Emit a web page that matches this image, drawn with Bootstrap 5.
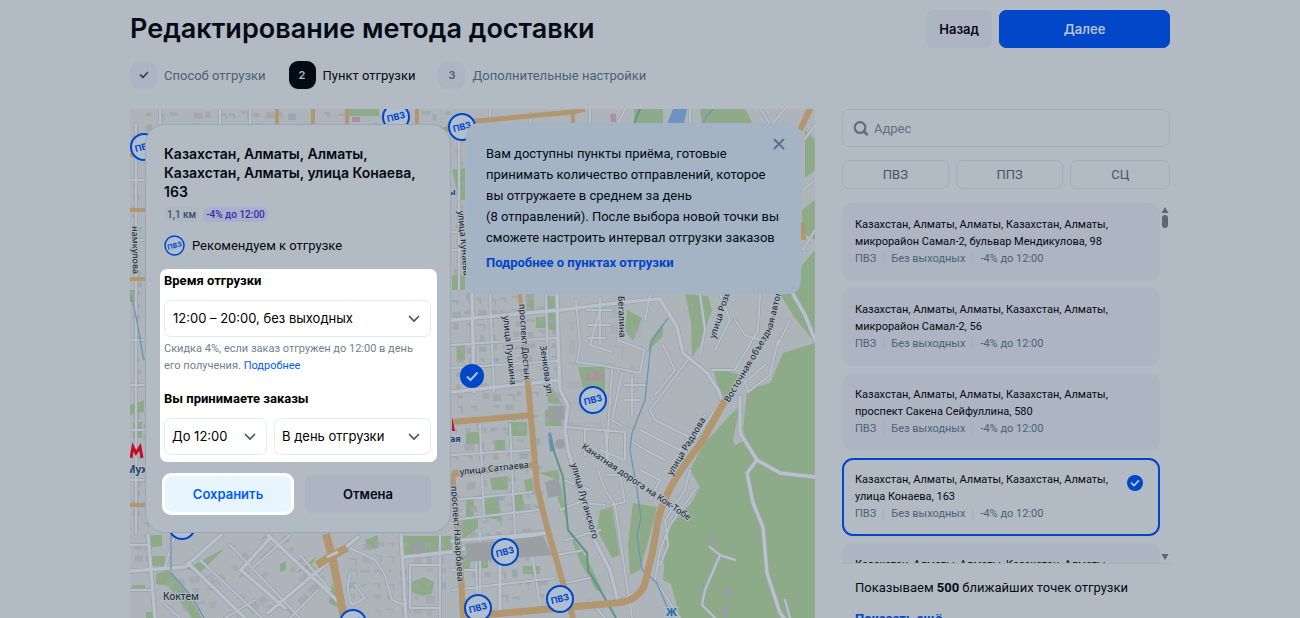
<!DOCTYPE html>
<html lang="ru">
<head>
<meta charset="utf-8">
<meta name="viewport" content="width=device-width, initial-scale=1">
<title>Редактирование метода доставки</title>
<link rel="stylesheet" href="https://cdn.jsdelivr.net/npm/bootstrap@5.3.0/dist/css/bootstrap.min.css">
<style>
:root{--bg:#b2bbc3;--soft:#acb5c1;--line:#a0afbf;--ink:#030b14;--mute:#4b6178;--blue:#0046c8}
body{font-family:Roboto,"Noto Sans",sans-serif;font-size:13px;line-height:17px;background:var(--bg);color:var(--ink);height:100vh;overflow:hidden}
button,input,select{font-family:inherit}
.page{max-width:80%;height:100vh}
.topbar{padding-top:10px}
h1{font-family:Inter,sans-serif;font-size:27px;line-height:38px;font-weight:600}
.gap-s{gap:7px}
.btn{--bs-btn-font-family:Inter,sans-serif;--bs-btn-font-size:13px;--bs-btn-font-weight:600;--bs-btn-line-height:18px;--bs-btn-padding-y:9px;--bs-btn-border-radius:7px}
.btn-soft{--bs-btn-bg:var(--soft);--bs-btn-color:var(--ink);--bs-btn-border-color:var(--soft);--bs-btn-padding-x:12px}
.btn-go{--bs-btn-bg:var(--blue);--bs-btn-color:#b6c3d3;--bs-btn-border-color:var(--blue);min-width:171px}
.btn-save{--bs-btn-bg:#e8f5ff;--bs-btn-color:#005bff;--bs-btn-border-color:#e8f5ff;--bs-btn-padding-y:8px}
.steps{gap:23px;margin:13px 0 20px;color:var(--mute)}
.step-no{width:27px;height:28px;border-radius:9px;background:var(--soft);font-family:Inter,sans-serif;font-weight:600;font-size:11px}
.step-on{color:var(--ink)}
.step-on .step-no{background:var(--ink);color:#b2bbc3}
.work{gap:27px;min-height:0}
.map-area{min-width:0;min-height:509px;overflow:hidden}
.map-svg{position:absolute;inset:0;width:100%;height:100%}
.map-svg text{font-family:"Noto Sans",sans-serif;font-weight:500;font-size:9px;fill:#25313d;stroke:#b2bbc3;stroke-width:2px;paint-order:stroke}
.map-svg .pin text{font-family:Inter,sans-serif;font-weight:700;font-size:9px;fill:var(--blue);stroke:none;text-anchor:middle}
.over{gap:15px;padding:14px 14px 0 15px}
.point{width:306px;flex:none;background:var(--bg);border:1px solid #98a8b8;border-radius:20px;padding:19px 14px 17px;margin-top:1px}
.point h2{font-family:Inter,sans-serif;font-size:14px;line-height:19px;font-weight:600;margin:0 4px 6px}
.in{margin-left:4px;margin-right:4px}
.tags{margin-bottom:13px}
.chip{font-size:10px;line-height:15px;font-weight:500;border-radius:6px;padding:0 3px;background:#acb8c2;color:#3b4e61}
.chip-sale{background:#a9b0cb;color:#3a2cad}
.lit{background:#fff;border-radius:7px;padding:3px 6px 7px 4px;margin:13px -1px 0 0;color:#000}
.lit label{font-size:13px;line-height:17px;font-weight:700;display:block;margin-bottom:11px}
.pick{width:100%;height:37px;border:1px solid #e3ebf2;border-radius:7px;padding:0 30px 0 8px;font-family:Inter,sans-serif;font-size:13px;color:#000;appearance:none;background:#fff url("data:image/svg+xml,%3Csvg xmlns='http://www.w3.org/2000/svg' viewBox='0 0 12 8'%3E%3Cpath fill='none' stroke='%23455a70' stroke-width='1.7' stroke-linecap='round' stroke-linejoin='round' d='M1.5 1.5 6 6.2l4.500-4.700'/%3E%3C/svg%3E") no-repeat right 10px center/12px 8px}
.days .pick{padding-left:7px}
.hint{font-size:11px;line-height:17px;color:#70818f;margin:3px 0 16px}
.hint a{color:#005bff;text-decoration:none}
.early{width:103px;flex:none}
.acts{margin:11px 5px 0 2px;gap:11px}
.ring{background:#fff;border-radius:9px;padding:3px;width:132px}
.note{background:#a4b4c4;border-radius:13px;padding:20px 12px 21px 20px;height:171px;min-width:0;position:relative}
.note p{font-size:13px;line-height:21px;margin:0 0 6px;max-width:300px}
.link-b{color:var(--blue);font-weight:700;text-decoration:none}
.x-btn{position:absolute;right:16px;top:15px;width:12px;height:12px;background:none;border:0;padding:0;line-height:0}
.side{width:328px;flex:none}
.find{height:38px;border:1px solid var(--line);border-radius:7px;padding:0 10px;gap:3px}
.find input{background:none;border:0;outline:0;font-size:13px;color:var(--mute);width:100%}
.find input::placeholder{color:#5c7086;opacity:1}
.types{margin-top:13px}
.btn-type{--bs-btn-font-family:Roboto,sans-serif;--bs-btn-color:#41566c;--bs-btn-border-color:var(--line);--bs-btn-font-weight:400;--bs-btn-line-height:17px;--bs-btn-padding-y:5px;--bs-btn-padding-x:39px}
.list-box{height:361px;margin-top:14px;border-bottom:1px solid #a9b3bd}
.pts{gap:7px;overflow:hidden;height:100%}
.pt{flex:none;display:flex;align-items:flex-start;justify-content:space-between;background:var(--soft);border:0;border-radius:11px;height:78px;padding:13px;text-align:left;color:var(--ink);font-size:11px;line-height:17px}
.pt-on{border:2px solid var(--blue);padding:11px;background:var(--bg)}
.meta{display:block;color:#4d627a;font-size:11px}
.meta span+span{border-left:1px solid #a1afbd;margin-left:7px;padding-left:7px}
.bar{width:10px;padding:4px 0 3px}
.thumb{width:6px;height:13px;border-radius:3px;background:#5f6871;margin-top:2px}
.foot{padding:15px 13px 0}
.more{display:block;margin-top:14px}
</style>
</head>
<body>
<div class="page mx-auto d-flex flex-column">
  <header class="topbar d-flex align-items-center gap-s">
    <h1 class="m-0 me-auto">Редактирование метода доставки</h1>
    <button class="btn btn-soft">Назад</button>
    <button class="btn btn-go">Далее</button>
  </header>
  <nav class="steps d-flex align-items-center" aria-label="Шаги">
    <div class="d-flex align-items-center gap-s"><span class="step-no d-flex align-items-center justify-content-center"><svg width="10" height="8" viewBox="0 0 10 8"><path d="M1.500 4 4 6.300 8.500 1.500" fill="none" stroke="#33475c" stroke-width="1.700" stroke-linecap="round" stroke-linejoin="round"/></svg></span><span>Способ отгрузки</span></div>
    <div class="d-flex align-items-center gap-s step-on"><span class="step-no d-flex align-items-center justify-content-center">2</span><span>Пункт отгрузки</span></div>
    <div class="d-flex align-items-center gap-s"><span class="step-no d-flex align-items-center justify-content-center">3</span><span>Дополнительные настройки</span></div>
  </nav>
  <main class="work d-flex flex-grow-1">
    <section class="map-area position-relative flex-grow-1">
      <svg class="map-svg" viewBox="130 109 685 509" preserveAspectRatio="xMidYMin slice" aria-label="Карта">
        <rect x="130" y="109" width="685" height="509" fill="#adb5ba"/>
        <g fill="#8eab89">
          <path d="M815 343 783 353 770 383 747 390 743 430 750 450 757 460 753 503 733 440 740 405 723 423 703 445 690 470 710 490 687 507 667 530 663 560 670 580 680 618H815zM690 470 700 487 690 505 667 530 663 580 740 618 815 618V343L780 380 745 440z"/>
          <path d="M685 294 708 296 712 310 700 345 692 357 691 322zM663 323 650 340 648 351 663 336zM713 368 742 375 722 402zM578 367H605V392L594 386 583 388zM627 310 642 318 633 341 625 330zM548 380 565 410 560 404 548 403zM600 510 612 507 620 555 612 558 597 530zM633 503 657 507 650 535 640 570 630 575 628 545zM815 470 812 510z"/>
          <path d="M348 109H379V116H348zM634 109H663V124H634zM700 109H745L753 124H702zM805 130 815 140 815 170 805 178zM802 210 815 200V240L802 232zM802 265 815 250V343L795 318 780 294 798 290z"/>
          <path d="M452 170 465 168V200H459zM452 275H465V290H452zM455 555H470V570H455zM526 294 534 294V310L527 315zM545 296H556V330H546zM536 317H547V328H536zM456 343 465 343V360H457zM495 440H505V450H495zM508 422H527V436H508zM545 410H562V426H545zM490 478 508 476V490H492zM484 500 498 496 502 520 486 518zM512 496 522 493 525 508 516 512zM466 500H474V522H466zM524 480 532 478 534 494H526zM466 432H480V444H466zM456 534 462 520 478 518V528L456 545zM538 473 558 470 567 520 558 500 560 480zM523 566H540V574H523zM478 560H488V568H478z"/>
          <path d="M148 535H162V546L148 548zM150 556H165V566H152zM156 574 168 570 185 590 202 618H192L178 598 168 586 156 584zM146 612H157V618H146zM132 585H145V590H132zM280 564 286 561 286 570 280 572zM332 583 341 609 329 603zM412 582 424 577 434 582 432 594 422 596 412 592zM365 540 378 535V548L368 550zM401 536H452V550L405 555zM570 534 588 560 603 592 596 590 580 562zM296 573 317 556 310 568zM130 290H137V302H130zM130 405 144 400V412L130 415zM133 422H142V438H133zM225 548 200 573 186 569z"/>
        </g>
        <path d="M673 109H687L684 124H667zM548 433 551 432 555 450 550 452z" fill="#6f93c0"/>
        <g id="blocks"></g>
        <g id="roads"></g>
        <g fill="none" stroke="#6d94b4" stroke-width="1.300">
          <path d="M668 318C660 330 650 340 650 352L645 400 632 433 630 450 637 490 641 518 637 535 642 570 657 583 667 607 672 618M171 535V570M170 572C185 588 192 596 204 618M713 109Q706 116 702 124M130 295C138 315 140 345 144 360"/>
          <path d="M550 440 563 477 568 530 587 553 588 570 603 595 616 618M640 109 634 124" stroke="#5f948b" stroke-width="2"/>
        </g>
        <g fill="none" stroke="#b1966f" stroke-linejoin="round">
          <path d="M436 132 477 121 573 112 585 109" stroke-width="5"/>
          <path d="M277 109V124M313 109V124M347 109V124M417 109V124M573 112V124M130 210H145M130 155H145M130 279H145M130 505H145M520 294 522 323 527 373" stroke-width="4"/>
          <path d="M527 373 533 440 537 487 547 527 563 583 573 618M452 422 533 415M812 105 800 130M452 474 535 465M452 474 455 500 461 575 463 618M802 222 803 240" stroke-width="6"/>
          <path d="M463 617 570 607 617 603Q640 600 645 583L653 550 658 520Q664 495 683 467L703 440 725 400" stroke-width="7"/>
          <path d="M725 400 750 363 770 330 779 294" stroke-width="3"/>
          <path d="M326 534 333 560 344 618M317 565 333 555 347 548" stroke-width="8"/>
        </g>
        <path d="M327 557 338 552" stroke="#bac2cb" stroke-width="3"/>
        <g fill="#ad90a0"><path d="M586 373H590V377H594V371H599V375H604V380H586zM610 114H616V122H611zM352 117H360V122H352z"/></g>
        <g fill="#999fa3"><circle cx="418" cy="547" r="7"/><circle cx="560" cy="444" r="5"/><path d="M712 538 719 541 716 547 710 544zM724 588H731V597H724zM722 606H728V615H722zM721 567H723V575H721zM465 544 543 536 552 555 467 562zM548 406H564V420H548zM545 482 558 478 562 495 548 498z"/></g>
        <path d="M452 415V431H455L452 417z" fill="#c40d28"/>
        <path d="M131 458 133 447 136 453 140 447 142 458" fill="none" stroke="#c40d28" stroke-width="3"/>
        <g>
          <text x="163" y="600" font-weight="400" style="font-size:10px">Коктем</text>
          <text transform="translate(460 475) rotate(-6)">улица Сатпаева</text>
          <text transform="translate(571 464) rotate(74)">улица Луганского</text>
          <text transform="translate(581 448) rotate(34)">Канатная дорога на Кок-Тобе</text>
          <text transform="translate(672 476) rotate(-59)">улица Радлова</text>
          <path id="east" d="M729 403 752 364 772 330 782 290V240" fill="none"/>
          <text><textPath href="#east">Восточная объездная автомобильная</textPath></text>
          <text transform="translate(715 339) rotate(-72)">улица Розы</text>
          <text transform="translate(618 296) rotate(88)">Бегалина</text>
          <text transform="translate(519 304) rotate(86)">проспект Достык</text>
          <text transform="translate(503 316) rotate(84)">улица Пушкина</text>
          <text transform="translate(540 346) rotate(82)">Зенкова ул.</text>
          <text transform="translate(451 486) rotate(86)">проспект Назарбаева</text>
          <text transform="translate(458 211) rotate(85)">улица Кунаева</text>
          <text transform="translate(132 226) rotate(89)">намкулова</text>
          <text x="126" y="473" style="fill:#23406e;font-weight:700;font-size:10px">Мухт</text>
          <text x="450" y="442" style="fill:#23406e;font-weight:700">ая</text>
          <text x="448" y="195" style="fill:#23406e;font-weight:700">ы</text>
          <text x="666" y="616" style="fill:#1f6ba8;font-weight:700;font-size:11px">Ж</text>
        </g>
        <g id="pins" fill="#b0bfd0" stroke="#0046c8" stroke-width="2"></g>
        <circle cx="472" cy="376" r="12" fill="#0046c8"/>
        <path d="M467 376.500 470.500 380 477.500 372.500" fill="none" stroke="#b6c3d3" stroke-width="2"/>
      </svg>
      <div class="over d-flex align-items-start position-relative">
        <form class="point">
          <h2>Казахстан, Алматы, Алматы, Казахстан, Алматы, улица Конаева, 163</h2>
          <div class="in tags d-flex gap-1"><span class="chip">1,1 км</span><span class="chip chip-sale">-4% до 12:00</span></div>
          <div class="in d-flex align-items-center gap-s">
            <svg width="21" height="21" viewBox="0 0 21 21" aria-hidden="true"><circle cx="10.500" cy="10.500" r="9.500" fill="#b0bfd0" stroke="#0046c8" stroke-width="1.500"/><text x="10.500" y="13" text-anchor="middle" transform="rotate(-14 10.500 10.500)" font-family="Inter" font-size="7" font-weight="700" fill="#0046c8">ПВЗ</text></svg>
            <span>Рекомендуем к отгрузке</span>
          </div>
          <div class="lit">
            <label for="t1">Время отгрузки</label>
            <select id="t1" class="pick"><option>12:00 – 20:00, без выходных</option></select>
            <div class="hint">Скидка 4%, если заказ отгружен до 12:00 в день<br>его получения. <a href="#">Подробнее</a></div>
            <label for="t2">Вы принимаете заказы</label>
            <div class="days d-flex gap-s">
              <div class="early"><select id="t2" class="pick"><option>До 12:00</option></select></div>
              <div class="flex-grow-1"><select class="pick" aria-label="День"><option>В день отгрузки</option></select></div>
            </div>
          </div>
          <div class="acts d-flex align-items-center">
            <div class="ring"><button type="button" class="btn btn-save w-100">Сохранить</button></div>
            <button type="button" class="btn btn-soft flex-grow-1">Отмена</button>
          </div>
        </form>
        <aside class="note flex-grow-1">
          <button class="x-btn" aria-label="Закрыть"><svg width="12" height="12" viewBox="0 0 12 12"><path d="M1.500 1.500 10.500 10.500M10.500 1.500 1.500 10.500" stroke="#5c7086" stroke-width="1.900" stroke-linecap="round"/></svg></button>
          <p>Вам доступны пункты приёма, готовые<br>принимать количество отправлений, которое<br>вы отгружаете в среднем за день<br>(8 отправлений). После выбора новой точки вы<br>сможете настроить интервал отгрузки заказов</p>
          <a href="#" class="link-b">Подробнее о пунктах отгрузки</a>
        </aside>
      </div>
    </section>
    <section class="side">
      <label class="find d-flex align-items-center">
        <svg width="17" height="17" viewBox="0 0 17 17" aria-hidden="true"><circle cx="7.500" cy="7.500" r="5.700" fill="none" stroke="#5c7086" stroke-width="2.400"/><path d="M12 12 14.700 14.700" stroke="#5c7086" stroke-width="3" stroke-linecap="round"/></svg>
        <input type="text" placeholder="Адрес" aria-label="Адрес">
      </label>
      <div class="types d-flex gap-s">
        <button class="btn btn-type flex-grow-1">ПВЗ</button><button class="btn btn-type flex-grow-1">ППЗ</button><button class="btn btn-type flex-grow-1">СЦ</button>
      </div>
      <div class="list-box d-flex">
        <div class="pts d-flex flex-column flex-grow-1">
          <button class="pt"><span>Казахстан, Алматы, Алматы, Казахстан, Алматы,<br>микрорайон Самал-2, бульвар Мендикулова, 98<span class="meta"><span>ПВЗ</span><span>Без выходных</span><span>-4% до 12:00</span></span></span></button>
          <button class="pt"><span>Казахстан, Алматы, Алматы, Казахстан, Алматы,<br>микрорайон Самал-2, 56<span class="meta"><span>ПВЗ</span><span>Без выходных</span><span>-4% до 12:00</span></span></span></button>
          <button class="pt"><span>Казахстан, Алматы, Алматы, Казахстан, Алматы,<br>проспект Сакена Сейфуллина, 580<span class="meta"><span>ПВЗ</span><span>Без выходных</span><span>-4% до 12:00</span></span></span></button>
          <button class="pt pt-on"><span>Казахстан, Алматы, Алматы, Казахстан, Алматы,<br>улица Конаева, 163<span class="meta"><span>ПВЗ</span><span>Без выходных</span><span>-4% до 12:00</span></span></span>
            <svg class="me-1 mt-1" width="16" height="16" viewBox="0 0 16 16"><circle cx="8" cy="8" r="8" fill="#0046c8"/><path d="M4.500 8.200 7 10.600 11.500 5.800" fill="none" stroke="#b6c3d3" stroke-width="1.800" stroke-linecap="round" stroke-linejoin="round"/></svg></button>
          <button class="pt"><span>Казахстан, Алматы, Алматы, Казахстан, Алматы,</span></button>
        </div>
        <div class="bar d-flex flex-column align-items-center" aria-hidden="true">
          <svg width="8" height="6" viewBox="0 0 8 6"><path d="M4 0 7.500 6H.5z" fill="#5f6871"/></svg>
          <div class="thumb mb-auto"></div>
          <svg width="8" height="6" viewBox="0 0 8 6"><path d="M4 6 7.500 0H.5z" fill="#5f6871"/></svg>
        </div>
      </div>
      <div class="foot">
        <p class="mb-0">Показываем <b>500</b> ближайших точек отгрузки</p>
        <a href="#" class="link-b more">Показать ещё</a>
      </div>
    </section>
  </main>
</div>
<script>
// Buildings: small seeded footprints inside each city district
let seed=7;const rnd=()=>(seed=(seed*16807)%2147483647)/2147483647;
let b='';
function district(x,y,w,h,step,rot,fade){
  let s='';
  for(let j=0;j<h;j+=step)for(let i=0;i<w;i+=step){
    if(rnd()<.25)continue;
    const a=4+rnd()*(step-7),c=3+rnd()*(step-8),px=x+i+2+rnd()*3,py=y+j+2+rnd()*3;
    const col=rnd()<.1?'#93a6b5':'#a1a6a9';
    s+=rnd()<.4?`<path d="M${px} ${py}h${a}v${c}h-2v${2-c}h${2-a}z" fill="${col}"/>`:`<rect x="${px}" y="${py}" width="${a}" height="${c}" fill="${col}"/>`;
  }
  b+=`<g transform="rotate(${rot[0]} ${rot[1]} ${rot[2]})" opacity="${fade}">${s}</g>`;
}
district(130,109,330,16,12,[0,0,0],.8);
district(130,124,14,440,11,[0,0,0],.8);
district(452,124,14,170,11,[0,0,0],.8);
district(452,294,104,125,12,[-3,500,350],.8);
district(452,424,84,190,13,[-3,500,500],.8);
district(215,545,95,80,14,[-42,262,580],.7);
district(345,540,100,78,13,[0,0,0],.6);
district(150,575,60,43,13,[-8,180,590],.6);
district(565,300,80,130,20,[4,600,360],.3);
blocks.innerHTML=b;
// Streets: a dark casing under a light fill
const big=['M452 320 560 310 617 303 645 300 660 299 677 327 683 353 707 373 718 390 723 403','M557 294 558 340 560 390 568 405 565 430 568 450 583 503 593 537 610 570 618 602','M740 397 740 433 757 460 780 473 815 477','M757 460 747 473 753 503 763 527 767 573 780 613 784 618','M793 294 805 315 815 340','M131 571 185 567 221 535','M148 535 155 618','M268 535 345 608','M188 563 245 618','M271 537 241 570 285 608','M358 537 268 613','M401 535 406 618','M405 557 451 552 478 545 545 533','M452 392 560 380','M472 294 474 392','M500 540V614','M452 541 545 533'];
const small=['M452 345 556 338','M452 368 558 361','M490 294 494 392','M546 294 548 372','M576 300 580 345 577 362 600 365 640 373 644 350 618 340 622 300','M600 310 590 345 612 352','M587 310H612M588 325H610M588 338H606M600 298V345','M612 370 606 460M622 373 612 420 622 426','M625 385H645M625 400H640M632 376V415','M690 357 650 410 655 420 695 440 720 402','M663 345 675 370 655 395','M640 430 680 450 705 415','M720 294 730 320 715 350','M760 294 758 330 735 370 712 370','M735 320 745 335 760 340','M778 340 770 375 748 392 745 382 765 365','M790 320 778 345','M565 427 625 432 625 460 600 450','M605 430 608 460M585 430V455','M598 470 605 490 615 505 632 618','M607 475 620 475 625 502 612 505','M583 503 605 505','M560 510 585 500','M630 440 645 450 665 460','M640 470 660 480 650 500','M695 490 670 525 660 550 655 580 668 600 680 618','M690 470 685 490 665 520 668 545 660 565','M710 547 720 555 705 590 702 605 715 618','M720 555 735 560','M452 455 530 450M452 500 532 492M480 424 484 520M510 424 515 535M452 590 555 578M475 545 478 610M530 540 540 605M452 520 538 510','M565 540 600 530M556 555 585 550M565 583 590 578','M200 560 262 618M230 545 300 618M290 535 250 570M318 590 290 618M255 600 225 618M300 555 330 590','M350 548 375 560 385 575 392 600 405 605M350 575Q345 590 352 605L365 598 355 585M410 565H440V608H410z','M452 570H475M440 535V618','M130 590H150M160 600 180 618M130 545H148M175 535 165 567','M136 124V534M130 180H144M130 240H144M130 340H144M130 385H144M130 430H144M130 480H144','M459 135V290M452 250H466M452 232H466','M590 109V124M625 109 618 124M690 109V124M760 109 770 124M785 109 772 124M160 109V124M220 109V124M250 109V124M390 109V124M490 118V109M530 114V124','M804 140 815 125M803 190 815 180M803 250 815 230','M480 532V618M563 480 590 490M790 618 785 600','M605 618 590 600M618 602 640 590','M650 294 645 320M700 294 705 330 700 355'];
roads.innerHTML=`<g fill="none" stroke-linejoin="round" stroke-linecap="round"><g stroke="#9ba3ae"><path stroke-width="5" d="${big.join('')}"/><path stroke-width="3.4" d="${small.join('')}"/></g><g stroke="#b9c1ca"><path stroke-width="2" d="${small.join('')}"/><path stroke-width="3.4" d="${big.join('')}"/></g></g>`;
// Pick-up points
pins.innerHTML=[[396,117],[144,147],[462,127],[593,400],[505,552],[478,608],[560,599],[353,623],[182,526]].map(([x,y])=>`<g class="pin"><circle cx="${x}" cy="${y}" r="13"/><text x="${x}" y="${y+3}" transform="rotate(-14 ${x} ${y})">ПВЗ</text></g>`).join('');
</script>
<script src="https://cdn.jsdelivr.net/npm/bootstrap@5.3.0/dist/js/bootstrap.bundle.min.js"></script>
</body>
</html>
